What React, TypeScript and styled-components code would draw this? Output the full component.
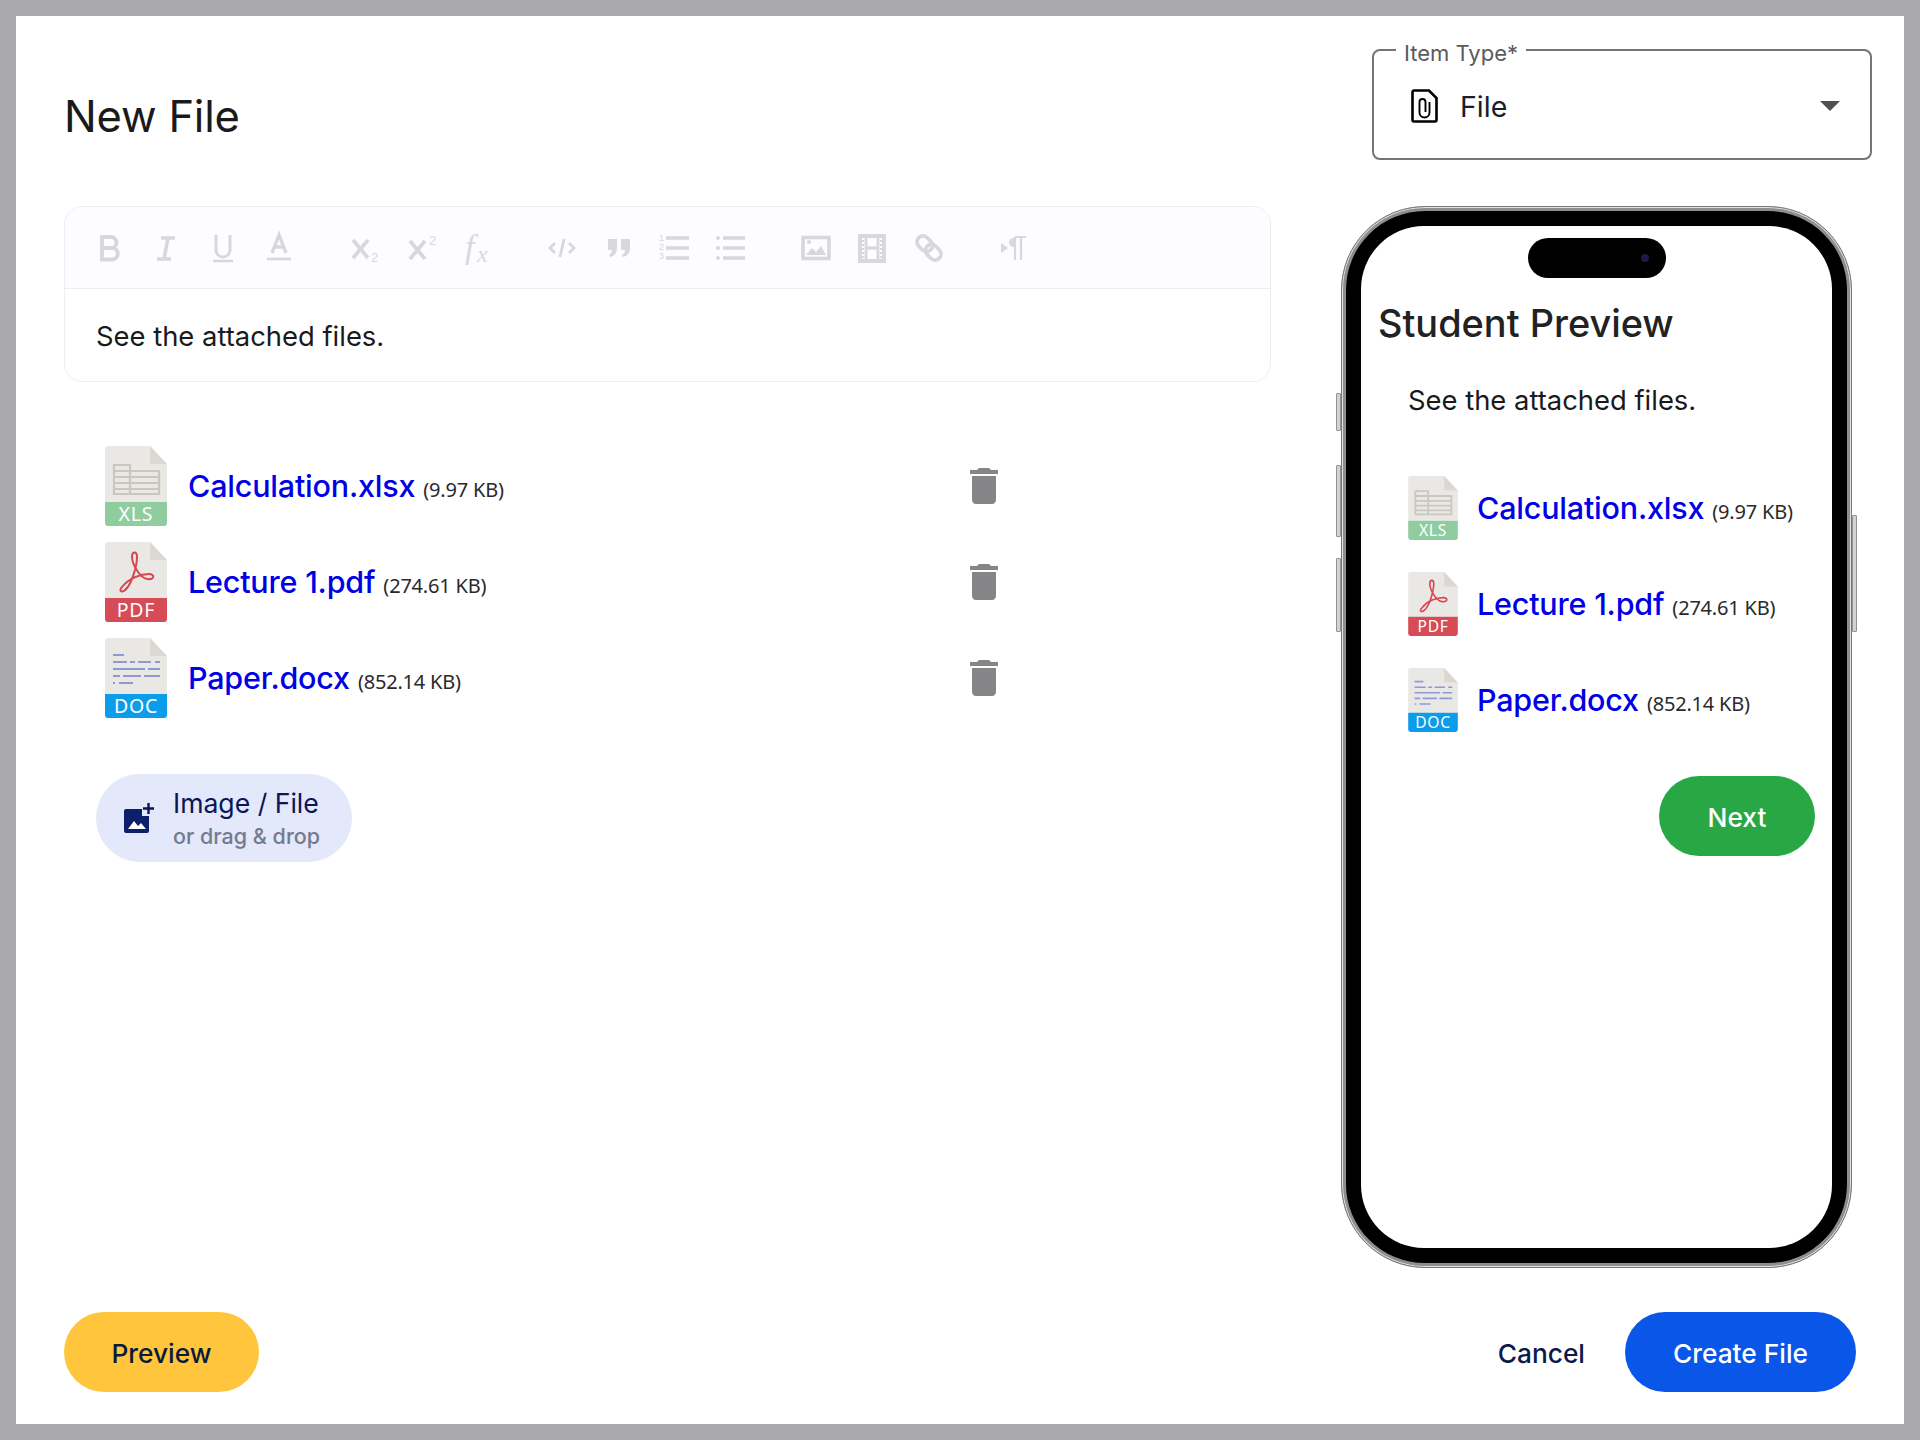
import React from 'react';
import styled, { createGlobalStyle } from 'styled-components';

const GlobalStyle = createGlobalStyle`
  html, body {
    margin: 0;
    padding: 0;
    background: #aaa9ac;
  }
  * {
    box-sizing: border-box;
  }
`;

const Page = styled.div`
  width: 1920px;
  height: 1440px;
  padding: 16px;
  background: #aaa9ac;
  font-family: 'Inter', 'Noto Sans', sans-serif;
  color: #1a1a1a;
`;

const Card = styled.div`
  width: 100%;
  height: 100%;
  padding: 33px 32px 32px 48px;
  background: #fff;
  display: flex;
  flex-direction: column;
  justify-content: space-between;
`;

const Columns = styled.div`
  display: flex;
  gap: 70px;
`;

const LeftColumn = styled.div`
  width: 1207px;
  display: flex;
  flex-direction: column;
`;

const RightColumn = styled.div`
  width: 531px;
  display: flex;
  flex-direction: column;
  gap: 46px;
`;

const Title = styled.h1`
  margin: 37px 0 60px;
  font-size: 43.5px;
  line-height: 60px;
  font-weight: 400;
  letter-spacing: -0.2px;
`;

const Editor = styled.div`
  height: 176px;
  border: 1px solid #eeedf2;
  border-radius: 18px;
  overflow: hidden;
  display: flex;
  flex-direction: column;
`;

const Toolbar = styled.div`
  height: 82px;
  padding-left: 29px;
  background: #fdfcfe;
  border-bottom: 1px solid #eeedf2;
  display: flex;
  align-items: center;
`;

const ToolGroup = styled.div<{ $offset?: number }>`
  margin-left: ${(p) => p.$offset ?? 0}px;
  display: flex;
  gap: 24.3px;
`;

const ToolIcon = styled.svg`
  width: 32px;
  height: 32px;
  fill: none;
  stroke: #d8d8da;
  stroke-width: 3;
  display: block;
  overflow: visible;
`;

const ToolText = styled.text`
  fill: #d8d8da;
  stroke: none;
  font-family: 'Liberation Sans', sans-serif;
`;

const FxText = styled.text`
  fill: #d8d8da;
  stroke: none;
  font-family: 'Liberation Serif', serif;
  font-style: italic;
`;

const EditorBody = styled.div`
  flex: 1;
  padding: 2px 0 0 31px;
  display: flex;
  align-items: center;
`;

const BodyText = styled.p`
  margin: 0;
  font-size: 27.4px;
  line-height: 36px;
  font-weight: 400;
`;

const FileList = styled.div`
  width: 903px;
  margin: 64px 0 0 41px;
  display: flex;
  flex-direction: column;
  gap: 16px;
`;

const FileRow = styled.div`
  display: flex;
  align-items: center;
  justify-content: space-between;
`;

const FileInfo = styled.div<{ $gap: number }>`
  display: flex;
  align-items: center;
  gap: ${(p) => p.$gap}px;
`;

const FileGlyph = styled.svg<{ $small?: boolean }>`
  width: ${(p) => (p.$small ? 50 : 62)}px;
  height: ${(p) => (p.$small ? 64 : 80)}px;
  display: block;
  flex: none;
`;

const BandLabel = styled.text`
  fill: #fff;
  font-family: 'Noto Sans', sans-serif;
  font-size: 19.5px;
  letter-spacing: 0.8px;
  text-anchor: middle;
`;

const FileName = styled.span`
  padding-bottom: 2px;
  display: flex;
  align-items: baseline;
  gap: 8px;
`;

const FileLink = styled.a`
  color: #0000e6;
  font-size: 30.5px;
  font-weight: 500;
  letter-spacing: -0.2px;
  text-decoration: none;
`;

const FileSize = styled.span`
  color: #2a2a2a;
  font-family: 'Noto Sans', sans-serif;
  font-size: 20px;
  letter-spacing: -0.2px;
`;

const TrashIcon = styled.svg`
  width: 48px;
  height: 48px;
  fill: #858587;
  display: block;
`;

const AddButton = styled.button`
  width: 256px;
  height: 88px;
  margin: 56px 0 0 32px;
  padding: 0 0 0 28px;
  border: none;
  border-radius: 45px;
  background: #e3e8fa;
  font-family: inherit;
  display: flex;
  align-items: center;
  gap: 19px;
  text-align: left;
`;

const AddIcon = styled.svg`
  width: 30px;
  height: 30px;
  display: block;
  flex: none;
`;

const AddLabel = styled.span`
  padding-top: 2px;
  display: flex;
  flex-direction: column;
  gap: 3px;
  color: #0b1557;
  font-size: 26.6px;
  line-height: 31px;
`;

const AddHint = styled.span`
  color: #747b8d;
  font-size: 21.5px;
  line-height: 28px;
  font-weight: 500;
`;

const TypeField = styled.fieldset`
  height: 111px;
  margin: 0 0 0 31px;
  padding: 0;
  border: 2px solid #757577;
  border-radius: 8px;
`;

const TypeLegend = styled.legend`
  height: 2px;
  margin-left: 22px;
  padding: 0 8px;
  color: #5a5a60;
  font-size: 22px;
  line-height: 8px;
`;

const TypeRow = styled.div`
  height: 106px;
  padding: 4px 30px 0 37px;
  display: flex;
  align-items: center;
  gap: 22px;
`;

const TypeValue = styled.span`
  flex: 1;
  font-size: 28.5px;
  color: #15202b;
`;

const Caret = styled.span`
  width: 0;
  height: 0;
  border-left: 10px solid transparent;
  border-right: 10px solid transparent;
  border-top: 10px solid #505054;
`;

const PhoneFrame = styled.div`
  position: relative;
  width: 511px;
  height: 1062px;
  padding: 4px;
  border: 1px solid #77777b;
  border-radius: 84px;
  background: #8e8e92;
  box-shadow: inset 0 0 0 1px #e2e2e4;
`;

const SideKey = styled.span<{ $top: number; $height: number; $right?: boolean }>`
  position: absolute;
  top: ${(p) => p.$top}px;
  ${(p) => (p.$right ? 'right: -6px;' : 'left: -6px;')}
  width: 5px;
  height: ${(p) => p.$height}px;
  background: #d2d2d5;
  border: 1px solid #929296;
  border-radius: 1px;
`;

const PhoneBezel = styled.div`
  width: 100%;
  height: 100%;
  padding: 15px;
  border-radius: 79px;
  background: #000;
`;

const PhoneScreen = styled.div`
  position: relative;
  width: 100%;
  height: 100%;
  padding: 73px 17px 0 17px;
  border-radius: 63px;
  background: #fff;
  display: flex;
  flex-direction: column;
`;

const Island = styled.div`
  position: absolute;
  top: 12px;
  left: 167px;
  width: 138px;
  height: 40px;
  padding-right: 17px;
  border-radius: 20px;
  background: #000;
  display: flex;
  align-items: center;
  justify-content: flex-end;
`;

const Lens = styled.span`
  width: 8px;
  height: 8px;
  border-radius: 50%;
  background: #1d1a45;
`;

const PreviewTitle = styled.h2`
  margin: 0 0 35px;
  font-size: 37.9px;
  line-height: 48px;
  font-weight: 500;
  color: #222;
`;

const PreviewBody = styled(BodyText)`
  margin-left: 30px;
`;

const PreviewFiles = styled.div`
  margin: 58px 0 0 30px;
  display: flex;
  flex-direction: column;
  gap: 32px;
`;

const PillButton = styled.button<{ $bg: string; $fg: string; $width: number }>`
  width: ${(p) => p.$width}px;
  height: 80px;
  padding: 2px 0 0;
  border: none;
  border-radius: 40px;
  background: ${(p) => p.$bg};
  color: ${(p) => p.$fg};
  font-family: inherit;
  font-size: 26.3px;
  font-weight: 500;
`;

const NextButton = styled(PillButton)`
  margin-top: 44px;
  align-self: flex-end;
`;

const Footer = styled.div`
  margin-right: 16px;
  display: flex;
  align-items: center;
  justify-content: space-between;
`;

const FooterActions = styled.div`
  display: flex;
  align-items: center;
  gap: 40px;
`;

const CancelButton = styled.button`
  padding: 2px 0 0;
  border: none;
  background: none;
  color: #0b1a4a;
  font-family: inherit;
  font-size: 26.3px;
  font-weight: 500;
`;

type Kind = 'xls' | 'pdf' | 'doc';

const bandColors: Record<Kind, string> = {
  xls: '#8fcd9f',
  pdf: '#d64b55',
  doc: '#0b9cec',
};

const FileTypeIcon = ({ kind, small }: { kind: Kind; small?: boolean }) => (
  <FileGlyph $small={small} viewBox="0 0 62 80">
    <path d="M3 0H45L62 18V56H0V3a3 3 0 0 1 3-3z" fill="#eae8e4" />
    <path d="M45 0L62 18H45z" fill="#dbd8d2" />
    {kind === 'xls' && (
      <g stroke="#cac6c0" strokeWidth="2.2" fill="none">
        <path d="M9 19H25V48H9zM25 25H54V48H25z" />
        <path d="M9 25H25M9 31H54M9 37H54M9 43H54" />
      </g>
    )}
    {kind === 'pdf' && (
      <path
        d="M17 45C13 49 17 52 22 46C27 40 32 24 32 15C32 9 27 9 27 15C27 22 35 36 42 37C50 38 50 32 44 32C36 32 24 36 17 45Z"
        fill="none"
        stroke="#d8474f"
        strokeWidth="2"
      />
    )}
    {kind === 'doc' && (
      <g stroke="#8f99d6" strokeWidth="2" fill="none">
        <path d="M8 17H19M8 24H22M25 24H30M33 24H46M50 24H55M8 31H40M43 31H55M8 38H15M18 38H36M39 38H55M8 45H10M14 45H28" />
      </g>
    )}
    <path d="M0 56H62V77a3 3 0 0 1-3 3H3a3 3 0 0 1-3-3z" fill={bandColors[kind]} />
    <BandLabel x="31" y="75">
      {kind.toUpperCase()}
    </BandLabel>
  </FileGlyph>
);

const Trash = () => (
  <TrashIcon viewBox="0 0 24 24">
    <path d="M6 19c0 1.1.9 2 2 2h8c1.1 0 2-.9 2-2V7H6v12zM19 4h-3.5l-1-1h-5l-1 1H5v2h14V4z" />
  </TrashIcon>
);

const files: { kind: Kind; name: string; size: string }[] = [
  { kind: 'xls', name: 'Calculation.xlsx', size: '(9.97 KB)' },
  { kind: 'pdf', name: 'Lecture 1.pdf', size: '(274.61 KB)' },
  { kind: 'doc', name: 'Paper.docx', size: '(852.14 KB)' },
];

const Tools = () => (
  <Toolbar>
    <ToolGroup>
      <ToolIcon viewBox="0 0 32 32">
        <path d="M8 5h9a5.5 5.5 0 0 1 0 11H8zM8 16h10a5.7 5.7 0 0 1 0 11.500H8z" strokeWidth="3.800" />
      </ToolIcon>
      <ToolIcon viewBox="0 0 32 32">
        <path d="M11 6h14M7 27h14M18 6l-4 21" strokeWidth="3.600" />
      </ToolIcon>
      <ToolIcon viewBox="0 0 32 32">
        <path d="M9 3v15a7 7 0 0 0 14 0V3" />
        <path d="M6 29h20" strokeWidth="2.600" />
      </ToolIcon>
      <ToolIcon viewBox="0 0 32 32">
        <path d="M9 21L16 3l7 18M11.500 15h9" strokeWidth="3.400" />
        <path d="M4 27h24" strokeWidth="2.600" />
      </ToolIcon>
    </ToolGroup>
    <ToolGroup $offset={56.4}>
      <ToolIcon viewBox="0 0 32 32">
        <path d="M2 8l15 18M17 8L2 26" strokeWidth="3.800" />
        <ToolText x="20" y="30" fontSize="13">2</ToolText>
      </ToolIcon>
      <ToolIcon viewBox="0 0 32 32">
        <path d="M2 9l15 18M17 9L2 27" strokeWidth="3.800" />
        <ToolText x="21" y="13" fontSize="13">2</ToolText>
      </ToolIcon>
      <ToolIcon viewBox="0 0 32 32">
        <FxText x="1" y="26" fontSize="34">f</FxText>
        <FxText x="13" y="30" fontSize="24">x</FxText>
      </ToolIcon>
    </ToolGroup>
    <ToolGroup $offset={50.4}>
      <ToolIcon viewBox="0 0 32 32">
        <path d="M9 11l-5 5 5 5M23 11l5 5-5 5M18 7l-4 18" strokeWidth="2.800" />
      </ToolIcon>
      <ToolIcon viewBox="0 0 32 32">
        <path
          d="M5 7h9v9c0 5-3 8-7 9l-1-2c2-1 3-3 3-5H5zM18 7h9v9c0 5-3 8-7 9l-1-2c2-1 3-3 3-5h-4z"
          fill="#d8d8da"
          stroke="none"
        />
      </ToolIcon>
      <ToolIcon viewBox="0 0 32 32">
        <ToolText x="0" y="9" fontSize="9">1</ToolText>
        <ToolText x="0" y="18" fontSize="9">2</ToolText>
        <ToolText x="0" y="27" fontSize="9">3</ToolText>
        <path d="M7 6h23M7 16h23M7 26h23" strokeWidth="3.600" />
      </ToolIcon>
      <ToolIcon viewBox="0 0 32 32">
        <circle cx="3" cy="6" r="2" fill="#d8d8da" stroke="none" />
        <circle cx="3" cy="16" r="2" fill="#d8d8da" stroke="none" />
        <circle cx="3" cy="26" r="2" fill="#d8d8da" stroke="none" />
        <path d="M8 6h22M8 16h22M8 26h22" strokeWidth="3.600" />
      </ToolIcon>
    </ToolGroup>
    <ToolGroup $offset={52.8}>
      <ToolIcon viewBox="0 0 32 32">
        <path d="M3 5.500h26v21H3z" strokeWidth="3.600" />
        <path d="M6 23l6-7 4 4 5-6 5 9z" fill="#d8d8da" stroke="none" />
        <circle cx="9" cy="10" r="2" fill="#d8d8da" stroke="none" />
      </ToolIcon>
      <ToolIcon viewBox="0 0 32 32">
        <path d="M4 4h24v25H4z" strokeWidth="3.800" />
        <path d="M10 4v25M22 4v25M10 16h12" strokeWidth="2.800" />
        <path d="M7 8v18M25 8v18" strokeWidth="2" strokeDasharray="2 2" />
      </ToolIcon>
      <ToolIcon viewBox="0 0 32 32">
        <g transform="rotate(45 16 16)">
          <rect x="1.500" y="10" width="17" height="12" rx="6" strokeWidth="3.800" />
          <rect x="13.500" y="10" width="17" height="12" rx="6" strokeWidth="3.800" />
        </g>
      </ToolIcon>
    </ToolGroup>
    <ToolGroup $offset={52.8}>
      <ToolIcon viewBox="0 0 32 32">
        <path d="M4 11l7 5-7 5z" fill="#d8d8da" stroke="none" />
        <path d="M18 5v23M24 5v23" strokeWidth="2.200" />
        <path d="M18 4h11v2h-11c-4 0-6 2-6 4.500s2 4.500 6 4.500z" fill="#d8d8da" stroke="none" />
      </ToolIcon>
    </ToolGroup>
  </Toolbar>
);

export default function App() {
  return (
    <Page>
      <GlobalStyle />
      <Card>
        <Columns>
          <LeftColumn>
            <Title>New File</Title>
            <Editor>
              <Tools />
              <EditorBody>
                <BodyText>See the attached files.</BodyText>
              </EditorBody>
            </Editor>
            <FileList>
              {files.map((f) => (
                <FileRow key={f.name}>
                  <FileInfo $gap={21}>
                    <FileTypeIcon kind={f.kind} />
                    <FileName>
                      <FileLink>{f.name}</FileLink>
                      <FileSize>{f.size}</FileSize>
                    </FileName>
                  </FileInfo>
                  <Trash />
                </FileRow>
              ))}
            </FileList>
            <AddButton>
              <AddIcon viewBox="0 0 30 30">
                <path d="M2 6H18V13H25V28a2 2 0 0 1-2 2H2a2 2 0 0 1-2-2V8a2 2 0 0 1 2-2z" fill="#0b1f6b" />
                <path d="M4 26l6-8 4 5 3-3 5 6z" fill="#fff" />
                <path d="M24.500 0v11M19 5.500h11" stroke="#0b1557" strokeWidth="2.400" fill="none" />
              </AddIcon>
              <AddLabel>
                Image / File
                <AddHint>or drag &amp; drop</AddHint>
              </AddLabel>
            </AddButton>
          </LeftColumn>
          <RightColumn>
            <TypeField>
              <TypeLegend>Item Type*</TypeLegend>
              <TypeRow>
                <svg width="27" height="34" viewBox="0 0 27 34" fill="none" stroke="#000" strokeWidth="2.600">
                  <path d="M3 1.500H18L25.500 9V31a1.500 1.500 0 0 1-1.500 1.500H3A1.500 1.500 0 0 1 1.500 31V3A1.500 1.500 0 0 1 3 1.500z" />
                  <path d="M18.500 13V23.500a5 5 0 0 1-10 0V13a3 3 0 0 1 6 0V23" strokeWidth="1.900" />
                </svg>
                <TypeValue>File</TypeValue>
                <Caret />
              </TypeRow>
            </TypeField>
            <PhoneFrame>
              <SideKey $top={186} $height={38} />
              <SideKey $top={258} $height={72} />
              <SideKey $top={351} $height={74} />
              <SideKey $right $top={308} $height={117} />
              <PhoneBezel>
                <PhoneScreen>
                  <Island>
                    <Lens />
                  </Island>
                  <PreviewTitle>Student Preview</PreviewTitle>
                  <PreviewBody>See the attached files.</PreviewBody>
                  <PreviewFiles>
                    {files.map((f) => (
                      <FileInfo $gap={19} key={f.name}>
                        <FileTypeIcon kind={f.kind} small />
                        <FileName>
                          <FileLink>{f.name}</FileLink>
                          <FileSize>{f.size}</FileSize>
                        </FileName>
                      </FileInfo>
                    ))}
                  </PreviewFiles>
                  <NextButton $bg="#28a745" $fg="#fff" $width={156}>
                    Next
                  </NextButton>
                </PhoneScreen>
              </PhoneBezel>
            </PhoneFrame>
          </RightColumn>
        </Columns>
        <Footer>
          <PillButton $bg="#ffc53d" $fg="#0b1a3a" $width={195}>
            Preview
          </PillButton>
          <FooterActions>
            <CancelButton>Cancel</CancelButton>
            <PillButton $bg="#0a56e8" $fg="#fff" $width={231}>
              Create File
            </PillButton>
          </FooterActions>
        </Footer>
      </Card>
    </Page>
  );
}
